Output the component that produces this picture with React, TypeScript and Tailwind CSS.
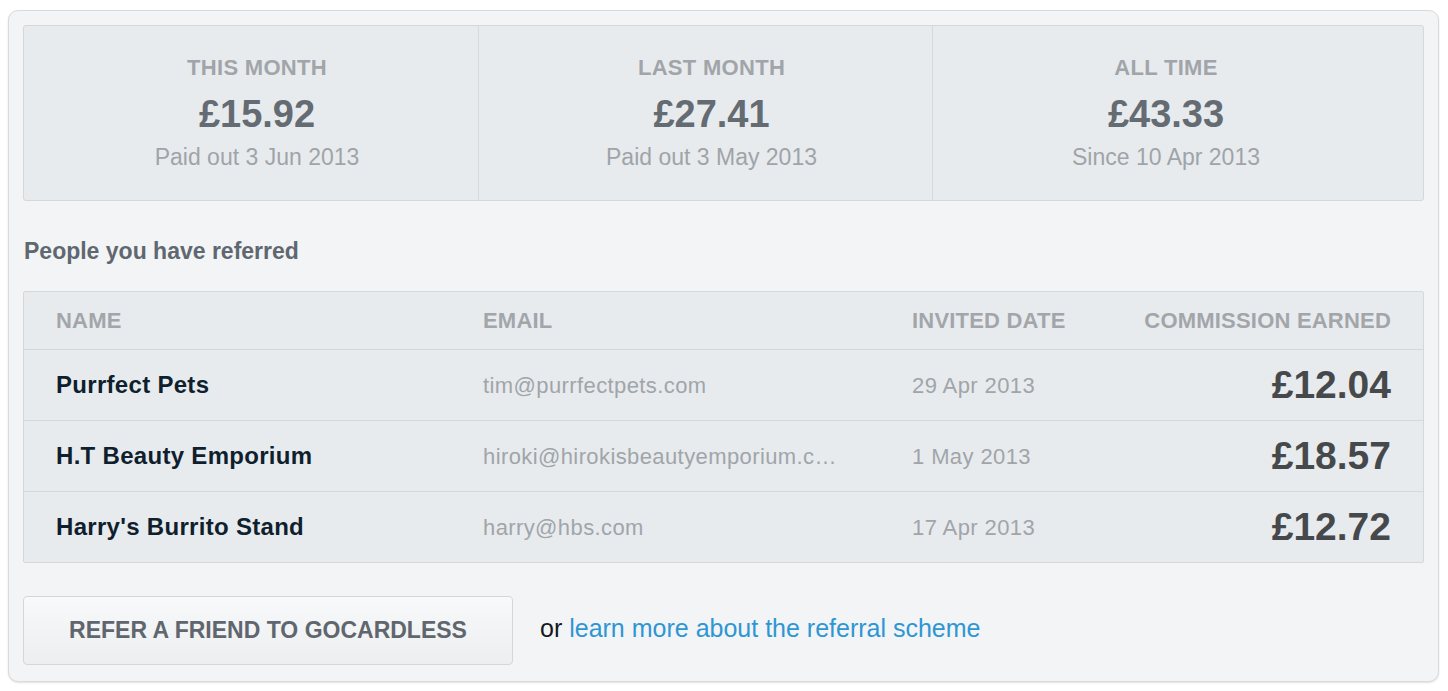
import React from "react";

type Stat = { label: string; amount: string; note: string; pad: string };

type Referral = {
  name: string;
  email: string;
  invited: string;
  commission: string;
};

const stats: Stat[] = [
  {
    label: "THIS MONTH",
    amount: "£15.92",
    note: "Paid out 3 Jun 2013",
    pad: "pl-[12px]",
  },
  {
    label: "LAST MONTH",
    amount: "£27.41",
    note: "Paid out 3 May 2013",
    pad: "pl-[12px]",
  },
  {
    label: "ALL TIME",
    amount: "£43.33",
    note: "Since 10 Apr 2013",
    pad: "pr-[24px]",
  },
];

const referrals: Referral[] = [
  {
    name: "Purrfect Pets",
    email: "tim@purrfectpets.com",
    invited: "29 Apr 2013",
    commission: "£12.04",
  },
  {
    name: "H.T Beauty Emporium",
    email: "hiroki@hirokisbeautyemporium.com",
    invited: "1 May 2013",
    commission: "£18.57",
  },
  {
    name: "Harry's Burrito Stand",
    email: "harry@hbs.com",
    invited: "17 Apr 2013",
    commission: "£12.72",
  },
];

const font = { fontFamily: '"Liberation Sans", Helvetica, Arial, sans-serif' };

function StatBox({ stat, last }: { stat: Stat; last: boolean }) {
  return (
    <div
      className={
        "flex flex-col items-center pt-[29px] " +
        stat.pad +
        (last ? "" : " border-r border-[#d5dadd]")
      }
    >
      <p className="text-[22px] font-bold leading-[26px] tracking-[0.3px] text-[#a1a5a9]">
        {stat.label}
      </p>
      <p className="mt-[10px] text-[38px] font-bold leading-[46px] text-[#646b72]">
        {stat.amount}
      </p>
      <p className="mt-[7px] text-[23px] leading-[26px] text-[#9fa4a8]">
        {stat.note}
      </p>
    </div>
  );
}

function ReferralsTable({ rows }: { rows: Referral[] }) {
  const cols = "grid grid-cols-[427px_429px_1fr_auto] items-center px-[32px]";
  return (
    <div className="mt-[28px] rounded-[2px] border border-[#d3d8dc] bg-[#e8ebee]">
      <div
        className={
          cols +
          " h-[57px] text-[22px] font-bold tracking-[0.2px] text-[#a2a6aa]"
        }
      >
        <span>NAME</span>
        <span>EMAIL</span>
        <span>INVITED DATE</span>
        <span className="text-right">COMMISSION EARNED</span>
      </div>
      {rows.map((row) => (
        <div
          key={row.email}
          className={cols + " h-[71px] border-t border-[#d3d8dc]"}
        >
          <span className="text-[24px] font-bold tracking-[0.3px] text-[#0f1f2d]">
            {row.name}
          </span>
          <span className="max-w-[362px] truncate text-[22px] tracking-[0.4px] text-[#a0a5a9]">
            {row.email}
          </span>
          <span className="text-[22px] tracking-[0.4px] text-[#a0a5a9]">
            {row.invited}
          </span>
          <span className="text-right text-[39px] font-bold text-[#46494c]">
            {row.commission}
          </span>
        </div>
      ))}
    </div>
  );
}

export default function App() {
  return (
    <div className="min-h-screen bg-white pl-[8px] pt-[10px]" style={font}>
      <div className="w-[1431px] rounded-[10px] border border-[#d8dadc] bg-[#f3f4f6] px-[14px] pb-[16px] pt-[14px] shadow-[0_1px_2px_rgba(0,0,0,0.12)]">
        <div className="grid h-[176px] grid-cols-[455px_454px_1fr] rounded-[3px] border border-[#d3d8dc] bg-[#e8ebee]">
          {stats.map((s, i) => (
            <StatBox key={s.label} stat={s} last={i === stats.length - 1} />
          ))}
        </div>

        <h2 className="pl-[1px] pt-[38px] text-[23px] font-bold leading-[24px] text-[#5f6770]">
          People you have referred
        </h2>

        <ReferralsTable rows={referrals} />

        <div className="mt-[33px] flex items-center">
          <button className="h-[69px] w-[490px] rounded-[4px] border border-[#d3d7db] bg-gradient-to-b from-[#f8f9fa] to-[#eceef0] text-[23px] font-bold text-[#5f666d]">
            REFER A FRIEND TO GOCARDLESS
          </button>
          <p className="mb-[4px] ml-[27px] text-[25px] text-[#14181c]">
            or{" "}
            <a href="#" className="text-[#2e96d3]">
              learn more about the referral scheme
            </a>
          </p>
        </div>
      </div>
    </div>
  );
}
